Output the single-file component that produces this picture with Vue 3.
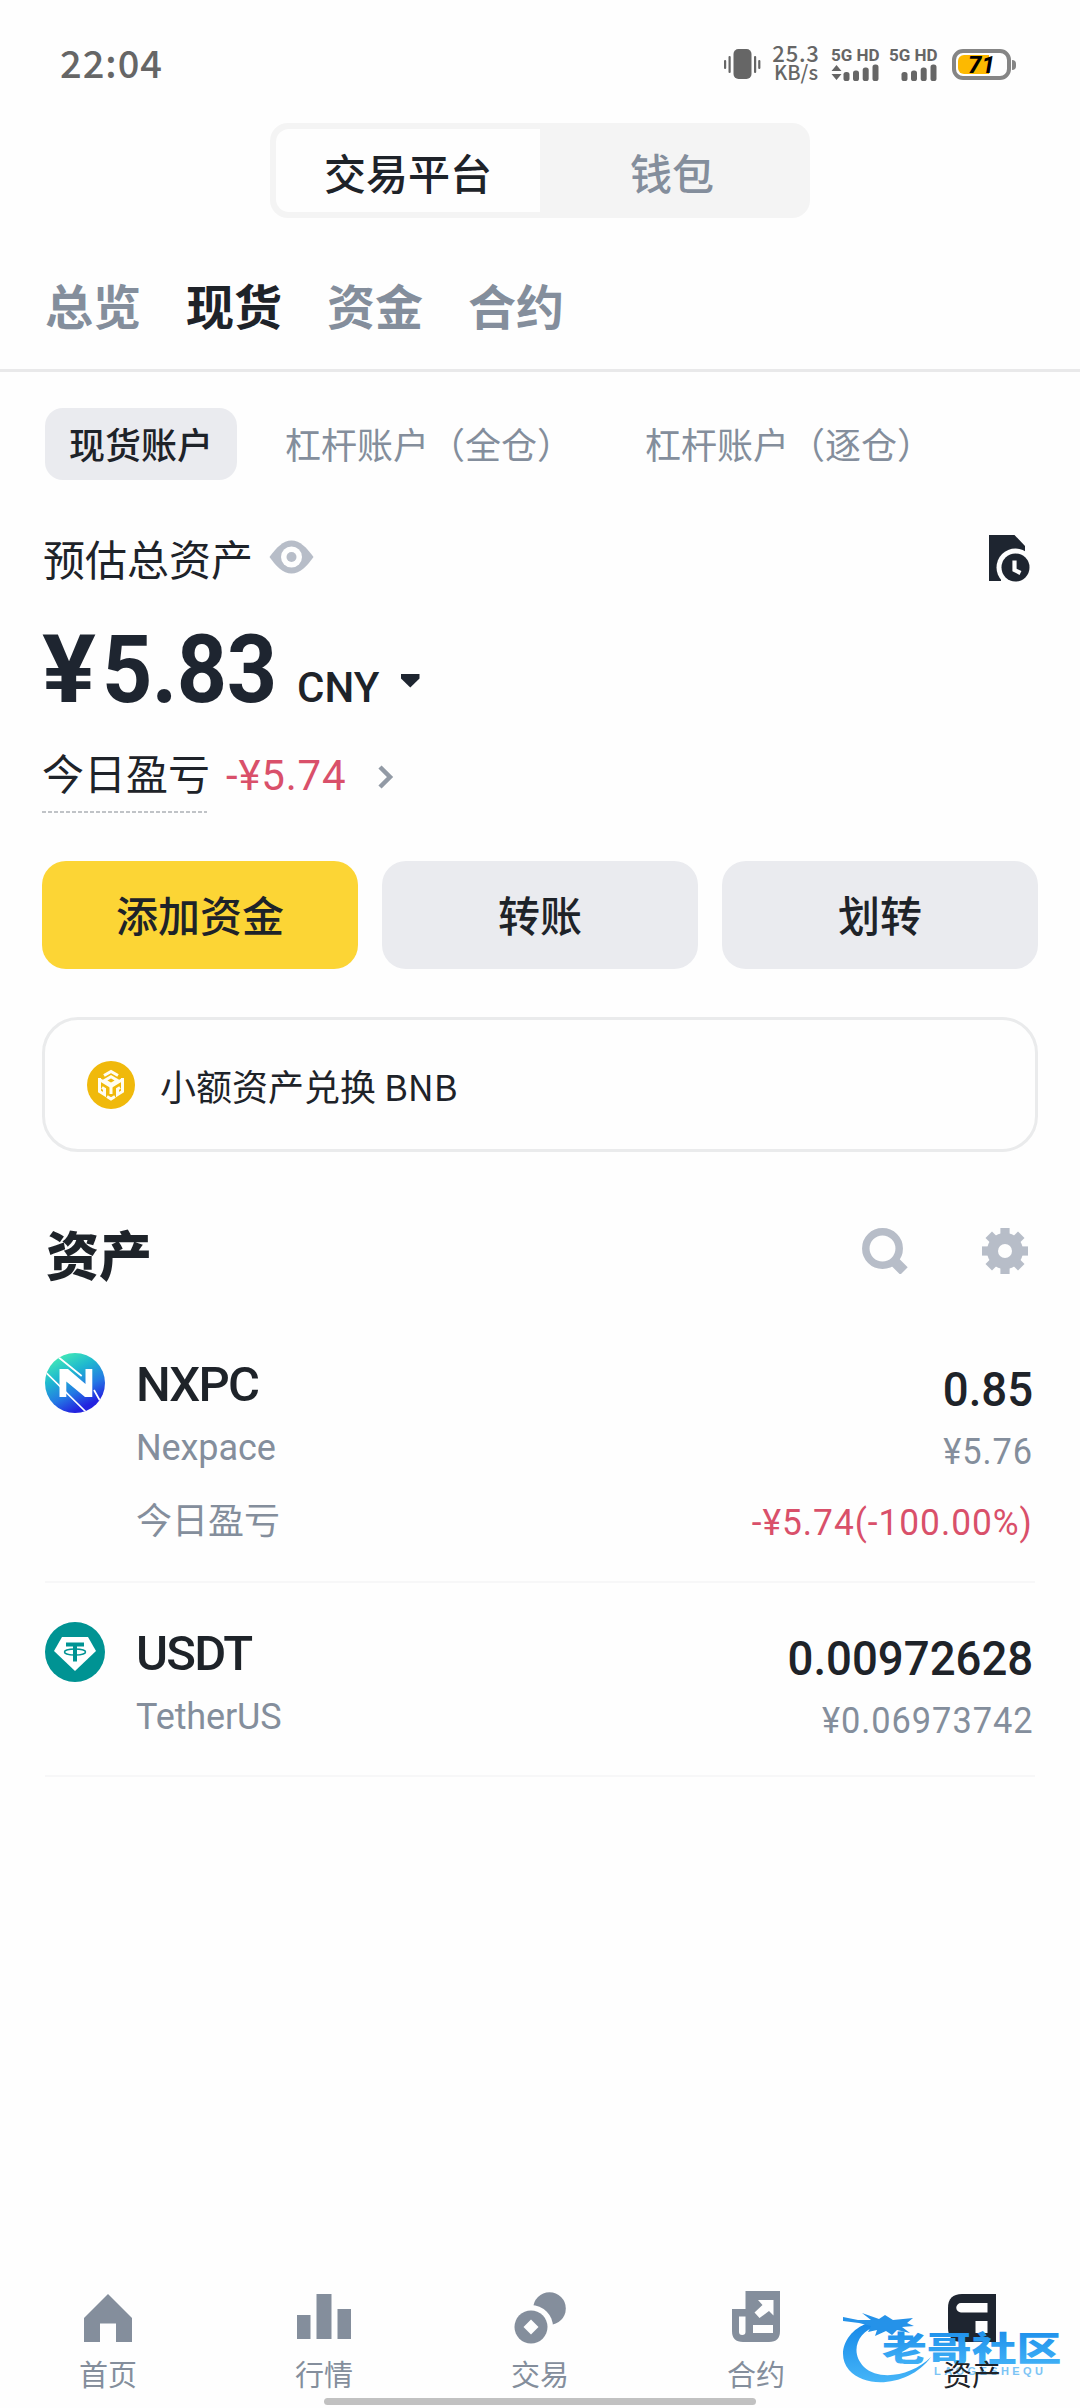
<script setup>
const sims = [{ arrows: true }, { arrows: false }]
const tabs = [
  { label: '总览' },
  { label: '现货', active: true },
  { label: '资金' },
  { label: '合约' },
]
const accounts = [
  { label: '现货账户', active: true },
  { label: '杠杆账户（全仓）' },
  { label: '杠杆账户（逐仓）' },
]
const actions = [
  { label: '添加资金', primary: true },
  { label: '转账' },
  { label: '划转' },
]
const assets = [
  { symbol: 'NXPC', name: 'Nexpace', amount: '0.85', value: '¥5.76', pnl: '-¥5.74(-100.00%)' },
  { symbol: 'USDT', name: 'TetherUS', amount: '0.00972628', value: '¥0.06973742' },
]
const nav = [
  { id: 'home', label: '首页' },
  { id: 'market', label: '行情' },
  { id: 'trade', label: '交易' },
  { id: 'futures', label: '合约' },
  { id: 'wallet', label: '资产', active: true },
]
const teeth = [0, 45, 90, 135, 180, 225, 270, 315]
</script>

<template>
  <div class="screen">
    <header class="status">
      <span class="time">22:04</span>
      <div class="status-right">
        <svg class="vibrate" width="37" height="32" viewBox="0 0 37 32">
          <rect x="9.5" y="1" width="18" height="30" rx="5" />
          <rect x="0" y="12" width="2.2" height="9" rx="1" />
          <rect x="4.5" y="8" width="2.2" height="17" rx="1" />
          <rect x="30" y="8" width="2.2" height="17" rx="1" />
          <rect x="34.2" y="12" width="2.2" height="9" rx="1" />
        </svg>
        <div class="speed"><span>25.3</span><span class="unit">KB/s</span></div>
        <div v-for="(s, i) in sims" :key="i" class="sim">
          <span>5G HD</span>
          <svg width="48" height="17" viewBox="0 0 48 17">
            <path v-if="s.arrows" d="M5.5 1l5 6h-10zM5.5 16l5-6h-10z" />
            <rect x="12.5" y="8" width="6" height="9" rx="2.6" />
            <rect x="22" y="6.500" width="6" height="10.500" rx="2.6" />
            <rect x="31.700" y="3.500" width="6" height="13.500" rx="2.6" />
            <rect x="41.500" y="0.500" width="6" height="16.500" rx="2.6" />
          </svg>
        </div>
        <div class="battery"><i class="level"></i><b>71</b><i class="nub"></i></div>
      </div>
    </header>

    <div class="switch">
      <div class="switch-item on">交易平台</div>
      <div class="switch-item">钱包</div>
    </div>

    <nav class="tabs">
      <span v-for="t in tabs" :key="t.label" :class="{ on: t.active }">{{ t.label }}</span>
    </nav>

    <div class="accounts">
      <span v-for="a in accounts" :key="a.label" :class="{ on: a.active }">{{ a.label }}</span>
    </div>

    <section class="total-head">
      <span class="total-label">预估总资产</span>
      <svg class="eye" width="45" height="34" viewBox="0 0 45 34">
        <path d="M.5 17C7 8 14 .5 22.500 .5S38 8 44.500 17C38 26 31 33.500 22.500 33.500S7 26 .5 17z" fill="#b7bdc8" />
        <circle cx="22.500" cy="17" r="10.500" fill="#fefefe" />
        <circle cx="22.500" cy="17" r="5" fill="#b7bdc8" />
      </svg>
      <svg class="history" width="42" height="48" viewBox="0 0 42 48">
        <path d="M0 0h25.500l10.500 11v10H26L12 36v10H0z" fill="#1e2530" />
        <circle cx="26.500" cy="32.500" r="19" fill="#fefefe" />
        <circle cx="26.500" cy="32.500" r="14" fill="#1e2530" />
        <path d="M25.500 25.500V35l6 3" fill="none" stroke="#fefefe" stroke-width="4.200" />
      </svg>
    </section>

    <section class="balance">
      <strong><span class="yen">¥</span><span class="digits">5.83</span></strong>
      <span class="cur">CNY</span>
      <svg width="19" height="14" viewBox="0 0 19 14"><path d="M0 0h18.500v4.500L9.250 13.500 0 4.500z" fill="#1e2530" /></svg>
    </section>

    <section class="today">
      <span class="today-label">今日盈亏</span>
      <span class="today-value">-¥5.74</span>
      <svg width="16" height="24" viewBox="0 0 16 24"><path d="M2 2l10 10L2 22" fill="none" stroke="#929aa5" stroke-width="4.500" /></svg>
    </section>

    <section class="actions">
      <button v-for="a in actions" :key="a.label" :class="{ primary: a.primary }">{{ a.label }}</button>
    </section>

    <section class="convert">
      <svg width="48" height="48" viewBox="0 0 48 48">
        <circle cx="24" cy="24" r="24" fill="#f0b90b" />
        <g fill="none" stroke="#fffdf2" stroke-width="3">
          <path d="M17 14.500l7-4 7 4" />
          <path d="M17.500 19.500l6.500-3.700 6.500 3.700-6.500 3.800z" />
          <path d="M12.500 17v13.500l5 3V28l-2.500-1.500" />
          <path d="M35.500 17v13.500l-5 3V28l2.500-1.500" />
          <path d="M12.500 18.500L24 25.500l11.500-7" />
          <path d="M24 25v8M20 35.500l4 2.500 4-2.500" />
        </g>
      </svg>
      <span>小额资产兑换 BNB</span>
    </section>

    <section class="assets-head">
      <h2>资产</h2>
      <svg width="46" height="46" viewBox="0 0 46 46">
        <circle cx="20.500" cy="20.500" r="16.700" fill="none" stroke="#b7bdc8" stroke-width="7.500" />
        <path d="M31 32l11 11" stroke="#b7bdc8" stroke-width="10.500" />
      </svg>
      <svg width="46" height="46" viewBox="-23 -23 46 46">
        <g fill="#b7bdc8">
          <rect v-for="t in teeth" :key="t" x="-4.600" y="-23" width="9.200" height="12" :transform="`rotate(${t})`" />
          <circle r="18" />
        </g>
        <circle r="7" fill="#fefefe" />
      </svg>
    </section>

    <section v-for="a in assets" :key="a.symbol" class="asset">
      <svg v-if="a.symbol === 'NXPC'" class="coin" width="60" height="60" viewBox="0 0 60 60">
        <defs>
          <linearGradient id="nx" x1=".25" y1="0" x2=".75" y2="1">
            <stop offset="0" stop-color="#45edb4" />
            <stop offset=".32" stop-color="#1fb9cf" />
            <stop offset=".62" stop-color="#2479e4" />
            <stop offset=".88" stop-color="#2322df" />
          </linearGradient>
          <clipPath id="nxc"><circle cx="30" cy="30" r="30" /></clipPath>
        </defs>
        <g clip-path="url(#nxc)">
          <rect width="60" height="60" fill="url(#nx)" />
          <path d="M12 3l24.700 20M0 18.500l41 40.500M49 37l7 12.500" fill="none" stroke="#fff" stroke-width="1.700" />
          <path d="M14.500 44V16h8.500L40.500 31V16h6.800v28H40L21.300 28.500V44z" fill="#fff" />
        </g>
      </svg>
      <svg v-else class="coin" width="60" height="60" viewBox="0 0 60 60">
        <circle cx="30" cy="30" r="30" fill="#009393" />
        <path d="M17 15h26l8 14-21 20L9 29z" fill="#fff" />
        <path d="M21 20.500h18v4h-7v15h-4v-15h-7z" fill="#009393" />
        <ellipse cx="30" cy="30" rx="10.500" ry="3" fill="none" stroke="#009393" stroke-width="1.500" />
      </svg>
      <div class="asset-left">
        <span class="symbol">{{ a.symbol }}</span>
        <span class="name">{{ a.name }}</span>
        <span v-if="a.pnl" class="pnl-label">今日盈亏</span>
      </div>
      <div class="asset-right">
        <span class="amount">{{ a.amount }}</span>
        <span class="value">{{ a.value }}</span>
        <span v-if="a.pnl" class="pnl">{{ a.pnl }}</span>
      </div>
    </section>

    <footer class="bottom">
      <div v-for="n in nav" :key="n.id" class="nav-item" :class="{ on: n.active }">
        <svg width="54" height="54" viewBox="0 0 54 54">
          <path v-if="n.id === 'home'" d="M27 3l24 24v24H35V32.500H19V51H3V27z" />
          <path v-else-if="n.id === 'market'" d="M0 24h13.500v24H0zM19.500 3h15v45h-15zM40.500 18h13.500v30H40.500z" />
          <template v-else-if="n.id === 'trade'">
            <circle cx="36.500" cy="17.500" r="16.300" />
            <circle cx="18" cy="36" r="22" class="bg" />
            <circle cx="18" cy="36" r="16.500" />
            <path d="M18 28.500l7.500 7.500-7.500 7.500-7.500-7.500z" class="bg" />
          </template>
          <template v-else-if="n.id === 'futures'">
            <path d="M16.500 0H51v40q0 11-11 11H14Q3 51 3 40V18h13.500z" />
            <path d="M10 25.500h6.500V41q0 3-3.250 3T10 41zM24 34h20v8H24zM29 9h15.500v15.500l-4.500-4.500-9.500 7-5-5.500 8-7.500z" class="bg" />
          </template>
          <template v-else>
            <path d="M17 3h34v48H17Q3 51 3 37V17Q3 3 17 3z" />
            <path d="M16 12h26.500v9.500H16a4.750 4.750 0 0 1 0-9.500zM30.500 30h12v12h-12z" class="bg" />
          </template>
        </svg>
        <span>{{ n.label }}</span>
      </div>
      <svg class="watermark" width="226" height="76" viewBox="0 0 226 76">
        <defs>
          <linearGradient id="wm" x1="0" y1="0" x2="0" y2="1">
            <stop offset="0" stop-color="#1688e8" />
            <stop offset="1" stop-color="#45b5f8" />
          </linearGradient>
        </defs>
        <path d="M27 14C4 22-5 46 8 61c19 21 63 14 82-13-18 18-51 25-67 10C8 43 17 22 36 17z" fill="url(#wm)" />
        <path d="M2 8l15 3h13l-9-7 17 6 6-4 8 5 20-2-6 5 7 3-12 1 8 6-13-3-5 5-6-4-11 5 2-6-9 2 3-6-12-3L2 12z" fill="#2592e9" />
        <text x="41" y="52" class="wm-title" textLength="138" lengthAdjust="spacingAndGlyphs" transform="translate(-12.300 0) scale(1.3 1)">老哥社区</text>
        <text x="93" y="66" class="wm-sub" textLength="109" lengthAdjust="spacing">LAOGESHEQU</text>
      </svg>
      <i class="indicator"></i>
    </footer>
  </div>
</template>

<style>
body {
  margin: 0;
  background: #fefefe;
}
</style>

<style scoped>
.screen {
  width: 1080px;
  height: 2408px;
  box-sizing: border-box;
  display: flex;
  flex-direction: column;
  overflow: hidden;
  background: #fefefe;
  color: #1e2329;
  font-family: "Noto Sans CJK SC", sans-serif;
  font-size: 42px;
}
.status {
  height: 123px;
  box-sizing: border-box;
  padding: 5px 64px 0 60px;
  display: flex;
  align-items: center;
  justify-content: space-between;
  color: #666;
}
.time {
  margin-top: -6px;
  font-size: 38px;
  font-weight: 500;
  letter-spacing: 1px;
}
.status-right {
  display: flex;
  align-items: center;
}
.vibrate, .sim svg {
  fill: #666;
}
.speed {
  width: 46px;
  margin: -4px 12px 0 12px;
  display: flex;
  flex-direction: column;
  align-items: center;
  font-size: 22px;
  font-weight: 500;
  line-height: 20px;
  letter-spacing: 0.8px;
}
.speed .unit {
  font-size: 20px;
  letter-spacing: 0;
}
.sim {
  width: 48px;
  margin-right: 10px;
  display: flex;
  flex-direction: column;
  font: 700 17px/17px Roboto, sans-serif;
  white-space: nowrap;
}
.battery {
  position: relative;
  width: 59px;
  height: 31px;
  box-sizing: border-box;
  margin-left: 5px;
  margin-right: 5px;
  border: 4px solid #858585;
  border-radius: 11px;
  padding: 2px;
  display: flex;
}
.level {
  width: 31px;
  border-radius: 6px 0 0 6px;
  background: #fdb900;
}
.battery b {
  position: absolute;
  inset: 0;
  font: italic 800 24px/24px Roboto, sans-serif;
  text-align: center;
  color: #000;
}
.nub {
  position: absolute;
  right: -9px;
  top: 7px;
  width: 4px;
  height: 10px;
  background: #858585;
  border-radius: 0 5px 5px 0;
}
.switch {
  width: 540px;
  height: 95px;
  box-sizing: border-box;
  margin: 0 auto;
  padding: 6px;
  display: flex;
  border-radius: 18px;
  background: #f4f4f4;
  font-weight: 500;
  color: #848e9c;
}
.switch-item {
  flex: 1;
  line-height: 85px;
  text-align: center;
}
.switch-item.on {
  border-radius: 13px 0 0 13px;
  background: #fefefe;
  color: #1e2329;
}
.tabs {
  height: 154px;
  box-sizing: border-box;
  border-bottom: 3px solid #e9e9ea;
  padding: 11px 45px 0;
  display: flex;
  gap: 45px;
  font-size: 48px;
  font-weight: 700;
  line-height: 150px;
  color: #848e9c;
}
.tabs .on {
  color: #1e2329;
}
.accounts {
  height: 72px;
  margin: 36px 0 0 45px;
  display: flex;
  gap: 24px;
  font-size: 36px;
  line-height: 71px;
  color: #848e9c;
}
.accounts span {
  padding: 0 24px;
}
.accounts .on {
  border-radius: 18px;
  background: #eaebef;
  color: #1e2329;
  font-weight: 500;
}
.total-head {
  height: 60px;
  margin: 50px 49px 0 43px;
  display: flex;
  align-items: center;
}
.total-label {
  margin-top: -5px;
}
.eye {
  margin: -6px 0 0 16px;
}
.history {
  margin: -2px 0 0 auto;
}
.balance {
  height: 110px;
  margin: 25px 0 0 42px;
  display: flex;
  align-items: baseline;
  font-family: Roboto, sans-serif;
  line-height: 110px;
}
.balance strong {
  font-size: 95px;
  letter-spacing: -0.6px;
  color: #1e2530;
}
.yen, .digits {
  display: inline-block;
  transform-origin: left;
}
.yen {
  margin-right: 10px;
  transform: scaleX(1.06);
}
.digits {
  margin-right: -15px;
  transform: scaleX(0.925);
}
.cur {
  margin-left: 21px;
  font-size: 42px;
  font-weight: 500;
}
.balance svg {
  margin-left: 22px;
  transform: translateY(-14px);
}
.today {
  height: 76px;
  margin: 12px 0 0 42px;
  display: flex;
  align-items: center;
}
.today-label {
  height: 75px;
  width: 165px;
  background: repeating-linear-gradient(90deg, #c0c3c7 0 4px, transparent 4px 6px) 0 100% / 100% 2px no-repeat;
  line-height: 68px;
  white-space: nowrap;
}
.today-value {
  margin: 0 32px 0 19px;
  font-family: Roboto, sans-serif;
  letter-spacing: 0.8px;
  color: #d9506a;
}
.today svg {
  margin-top: 4px;
}
.actions {
  height: 108px;
  margin: 48px 42px 0;
  display: flex;
  gap: 24px;
}
.actions button {
  flex: 1;
  border: 0;
  padding: 0 0 4px;
  border-radius: 24px;
  background: #eaebef;
  color: #1e2329;
  font: 500 42px "Noto Sans CJK SC", sans-serif;
}
.actions .primary {
  background: #fcd535;
}
.convert {
  height: 135px;
  box-sizing: border-box;
  margin: 48px 42px 0;
  padding: 0 42px;
  display: flex;
  align-items: center;
  gap: 25px;
  border: 3px solid #eaebec;
  border-radius: 36px;
  font-size: 36px;
}
.assets-head {
  height: 80px;
  margin: 60px 52px 0 46px;
  display: flex;
  align-items: center;
}
.assets-head h2 {
  margin: 2px auto 0 0;
  font-size: 53px;
  font-weight: 900;
}
.assets-head svg {
  margin: -2px 0 0 74px;
}
.asset {
  margin: 0 45px;
  padding: 61px 2px 16px 0;
  border-bottom: 2px solid #f7f7f8;
  display: flex;
  font-family: Roboto, "Noto Sans CJK SC", sans-serif;
  font-size: 36px;
  color: #848e9c;
}
.asset + .asset {
  padding-top: 39px;
  padding-bottom: 27px;
}
.asset-left, .asset-right {
  display: flex;
  flex-direction: column;
}
.asset-left {
  margin-left: 31px;
  line-height: 62px;
}
.asset-right {
  margin: 6px 0 -6px auto;
  align-items: flex-end;
  line-height: 62px;
}
.symbol, .amount {
  color: #1e2329;
  font-size: 49px;
  font-weight: 500;
  line-height: 64px;
}
.symbol {
  letter-spacing: -1.8px;
}
.name {
  letter-spacing: -0.1px;
}
.pnl-label {
  line-height: 86px;
}
.amount {
  line-height: 62px;
  transform: scaleX(0.93);
  transform-origin: right;
}
.value, .pnl {
  letter-spacing: 1px;
  transform: scaleX(0.955);
  transform-origin: right;
}
.pnl {
  line-height: 80px;
  transform: scaleX(0.98);
  color: #d9506a;
}
.bottom {
  position: relative;
  height: 120px;
  margin-top: auto;
  display: flex;
}
.nav-item {
  flex: 1;
  padding-top: 3px;
  display: flex;
  flex-direction: column;
  align-items: center;
  font-size: 29px;
  line-height: 57px;
  color: #848e9c;
}
.nav-item svg {
  fill: #848e9c;
  flex: none;
}
.nav-item .bg {
  fill: #fefefe;
}
.nav-item.on {
  color: #1e2329;
}
.nav-item.on svg {
  fill: #1e2530;
}
.nav-item span {
  position: relative;
  z-index: 2;
}
.watermark {
  position: absolute;
  left: 841px;
  top: 21px;
}
.wm-title {
  font: 900 34px "Noto Sans CJK SC", sans-serif;
  fill: url(#wm);
}
.wm-sub {
  font: 700 11px "Liberation Sans", sans-serif;
  fill: #7cc4f5;
}
.indicator {
  position: absolute;
  left: 324px;
  bottom: 3px;
  width: 432px;
  height: 7px;
  border-radius: 4px;
  background: #c1c1c1;
}
</style>
